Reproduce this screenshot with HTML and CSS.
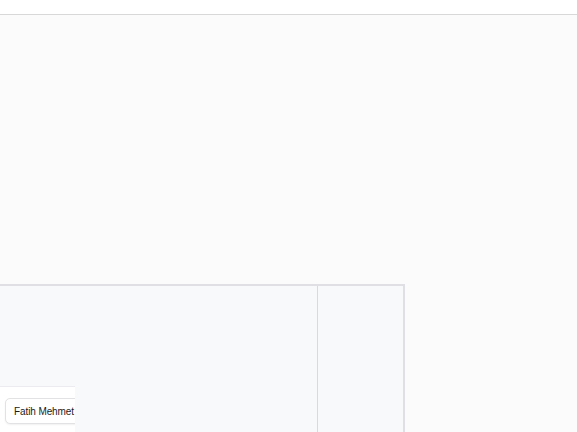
FILE: index.html
```html
<!DOCTYPE html>
<html lang="en">
<head>
    <meta charset="UTF-8">
    <meta name="viewport" content="width=device-width, initial-scale=1.0">
    <title>Board</title>
    <link rel="stylesheet" href="styles.css">
</head>
<body>
    <div class="topbar"></div>
    <div class="canvas">
        <div class="board">
            <div class="board-main"></div>
            <div class="board-side"></div>
        </div>
        <div class="user-panel">
            <button type="button" class="user-btn">Fatih Mehmet</button>
        </div>
    </div>
</body>
</html>
```

FILE: styles.css
```css
body {
    margin: 0;
    height: 100vh;
    overflow: hidden;
    background: #fbfbfb;
    font-family: 'Liberation Sans', Arial, sans-serif;
    display: flex;
    flex-direction: column;
}

.topbar {
    height: 14px;
    flex-shrink: 0;
    background: #fff;
    border-bottom: 1px solid #d8d8d8;
}

.canvas {
    position: relative;
    flex: 1;
    display: flex;
    flex-direction: column;
    padding-top: 269px;
}

.board {
    display: flex;
    flex: 1;
    width: 403px;
    background: #f8f9fb;
    border-top: 2px solid #dfdfe4;
    border-right: 2px solid #dfdfe4;
}

.board-main {
    width: 317px;
    border-right: 1px solid #dadade;
}

.board-side {
    flex: 1;
}

.user-panel {
    position: absolute;
    left: 0;
    top: 371px;
    bottom: 0;
    width: 75px;
    overflow: hidden;
    background: #fff;
    border-top: 1px solid #ececf0;
}

.user-btn {
    margin: 11px 0 0 5px;
    height: 26px;
    padding: 0 10px 0 8px;
    white-space: nowrap;
    background: #fff;
    border: 1px solid #e2e2e4;
    border-radius: 5px;
    box-shadow: 0 1px 2px rgba(0, 0, 0, 0.06);
    font-family: 'Liberation Sans', Arial, sans-serif;
    font-size: 10px;
    letter-spacing: -0.1px;
    color: #1a1a1a;
}
```
